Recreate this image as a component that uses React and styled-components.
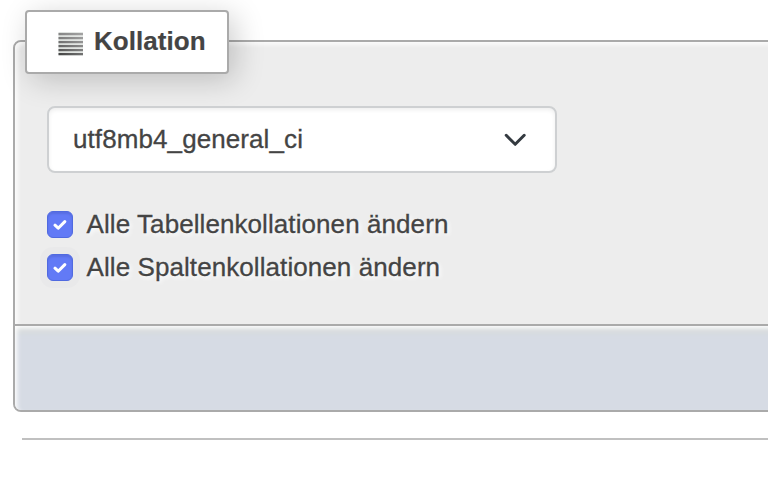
import React from "react";
import styled, { createGlobalStyle } from "styled-components";

const GlobalStyle = createGlobalStyle`
  * {
    box-sizing: border-box;
  }
  body {
    margin: 0;
    background: #fff;
    color: #444;
    font-family: "Liberation Sans", Arial, sans-serif;
    font-size: 26px;
    overflow: hidden;
  }
`;

const Page = styled.main`
  height: 486px;
  padding-top: 40px;
  padding-left: 13px;
  overflow: hidden;
`;

const Card = styled.section`
  height: 372px;
  display: flex;
  flex-direction: column;
  margin-right: -20px;
  border: 2px solid #aaa;
  border-radius: 8px;
  background: #ededed;
`;

const CardBody = styled.div`
  height: 282px;
  padding-left: 32px;
  border-radius: 6px 0 0 0;
  box-shadow: inset 3px 3px 5px -1px #fff;
`;

const Legend = styled.h2`
  display: flex;
  align-items: center;
  width: 204px;
  height: 64px;
  margin: -32px 0 32px -22px;
  padding: 0 0 2px 31px;
  border: 2px solid #aaa;
  border-radius: 4px;
  background: #fff;
  box-shadow: 6px 6px 30px rgba(0, 0, 0, 0.2);
  font-size: 26px;
  line-height: 30px;
  letter-spacing: 0.06px;
  white-space: nowrap;
  -webkit-text-stroke: 0.2px #444;

  svg {
    flex: none;
    margin: 5px 11px 0 0;
  }
`;

const Select = styled.button`
  display: flex;
  align-items: center;
  justify-content: space-between;
  width: 510px;
  height: 67px;
  padding: 0 29px 0 24px;
  border: 2px solid #ced0d2;
  border-radius: 8px;
  background: #fff;
  box-shadow: inset 0 2px 4px rgba(0, 0, 0, 0.07);
  color: #444;
  font: inherit;
  letter-spacing: 0.09px;
  -webkit-text-stroke: 0.3px #444;
`;

const Options = styled.div`
  margin-top: 30px;
`;

const Option = styled.label`
  display: flex;
  align-items: center;
  height: 43px;
  gap: 13.5px;
  line-height: 30px;
  letter-spacing: 0.08px;
  text-shadow: 2px 2px 4px #fff;
  white-space: nowrap;
  -webkit-text-stroke: 0.3px #444;
`;

const OptionText = styled.span`
  padding-bottom: 2px;
`;

const Check = styled.span`
  display: flex;
  align-items: center;
  justify-content: center;
  width: 26px;
  height: 27px;
  border: 1px solid #506ae0;
  border-radius: 6px;
  background: #627af6;
  box-shadow: inset 0 2px 2px rgba(50, 60, 150, 0.2)
    ${(props) => props.$focused && ", 0 0 0 7px #e9e9ea"};
`;

const CardFooter = styled.footer`
  flex: 1;
  border-top: 2px solid #aaa;
  border-radius: 0 0 6px 6px;
  background: #d6dbe4;
  box-shadow: inset 3px 3px 5px -1px #fff, inset 0 10px 5px -2px #d7dcdd;
`;

const Divider = styled.hr`
  height: 2px;
  margin: 26px 0 0 9px;
  border: 0;
  background: #c0c0c0;
`;

const lines = ["#858585", "#7c7c7c", "#707070", "#646464", "#585858", "#444"];

const CollationIcon = () => (
  <svg width="25" height="24" viewBox="0 0 25 24">
    <defs>
      <linearGradient id="fade">
        <stop offset="0" stopColor="#fff" stopOpacity="0" />
        <stop offset="1" stopColor="#fff" stopOpacity=".25" />
      </linearGradient>
    </defs>
    <rect x=".5" width="24.5" height="23.5" fill="#dce0dd" />
    {lines.map((color, i) => (
      <rect key={color} x=".5" y={1 + i * 4} width="24.5" height="2.2" fill={color} />
    ))}
    <rect x=".5" width="24.5" height="23.5" fill="url(#fade)" />
  </svg>
);

const CheckOption = ({ children, focused }) => (
  <Option>
    <Check role="checkbox" aria-checked="true" $focused={focused}>
      <svg width="14" height="12" viewBox="0 0 14 12" fill="none">
        <path
          d="M2 6.2 5.2 9.2 11.8 2.6"
          stroke="#fff"
          strokeWidth="3"
          strokeLinecap="round"
          strokeLinejoin="round"
        />
      </svg>
    </Check>
    <OptionText>{children}</OptionText>
  </Option>
);

const App = () => (
  <>
    <GlobalStyle />
    <Page>
      <Card>
        <CardBody>
          <Legend>
            <CollationIcon />
            Kollation
          </Legend>
          <Select type="button">
            utf8mb4_general_ci
            <svg width="22" height="14" viewBox="0 0 22 14" fill="none">
              <path
                d="M2.2 2.3 11.2 11.3 20.2 2.3"
                stroke="#343a40"
                strokeWidth="3"
                strokeLinecap="round"
                strokeLinejoin="round"
              />
            </svg>
          </Select>
          <Options>
            <CheckOption>Alle Tabellenkollationen ändern</CheckOption>
            <CheckOption focused>Alle Spaltenkollationen ändern</CheckOption>
          </Options>
        </CardBody>
        <CardFooter />
      </Card>
      <Divider />
    </Page>
  </>
);

export default App;
